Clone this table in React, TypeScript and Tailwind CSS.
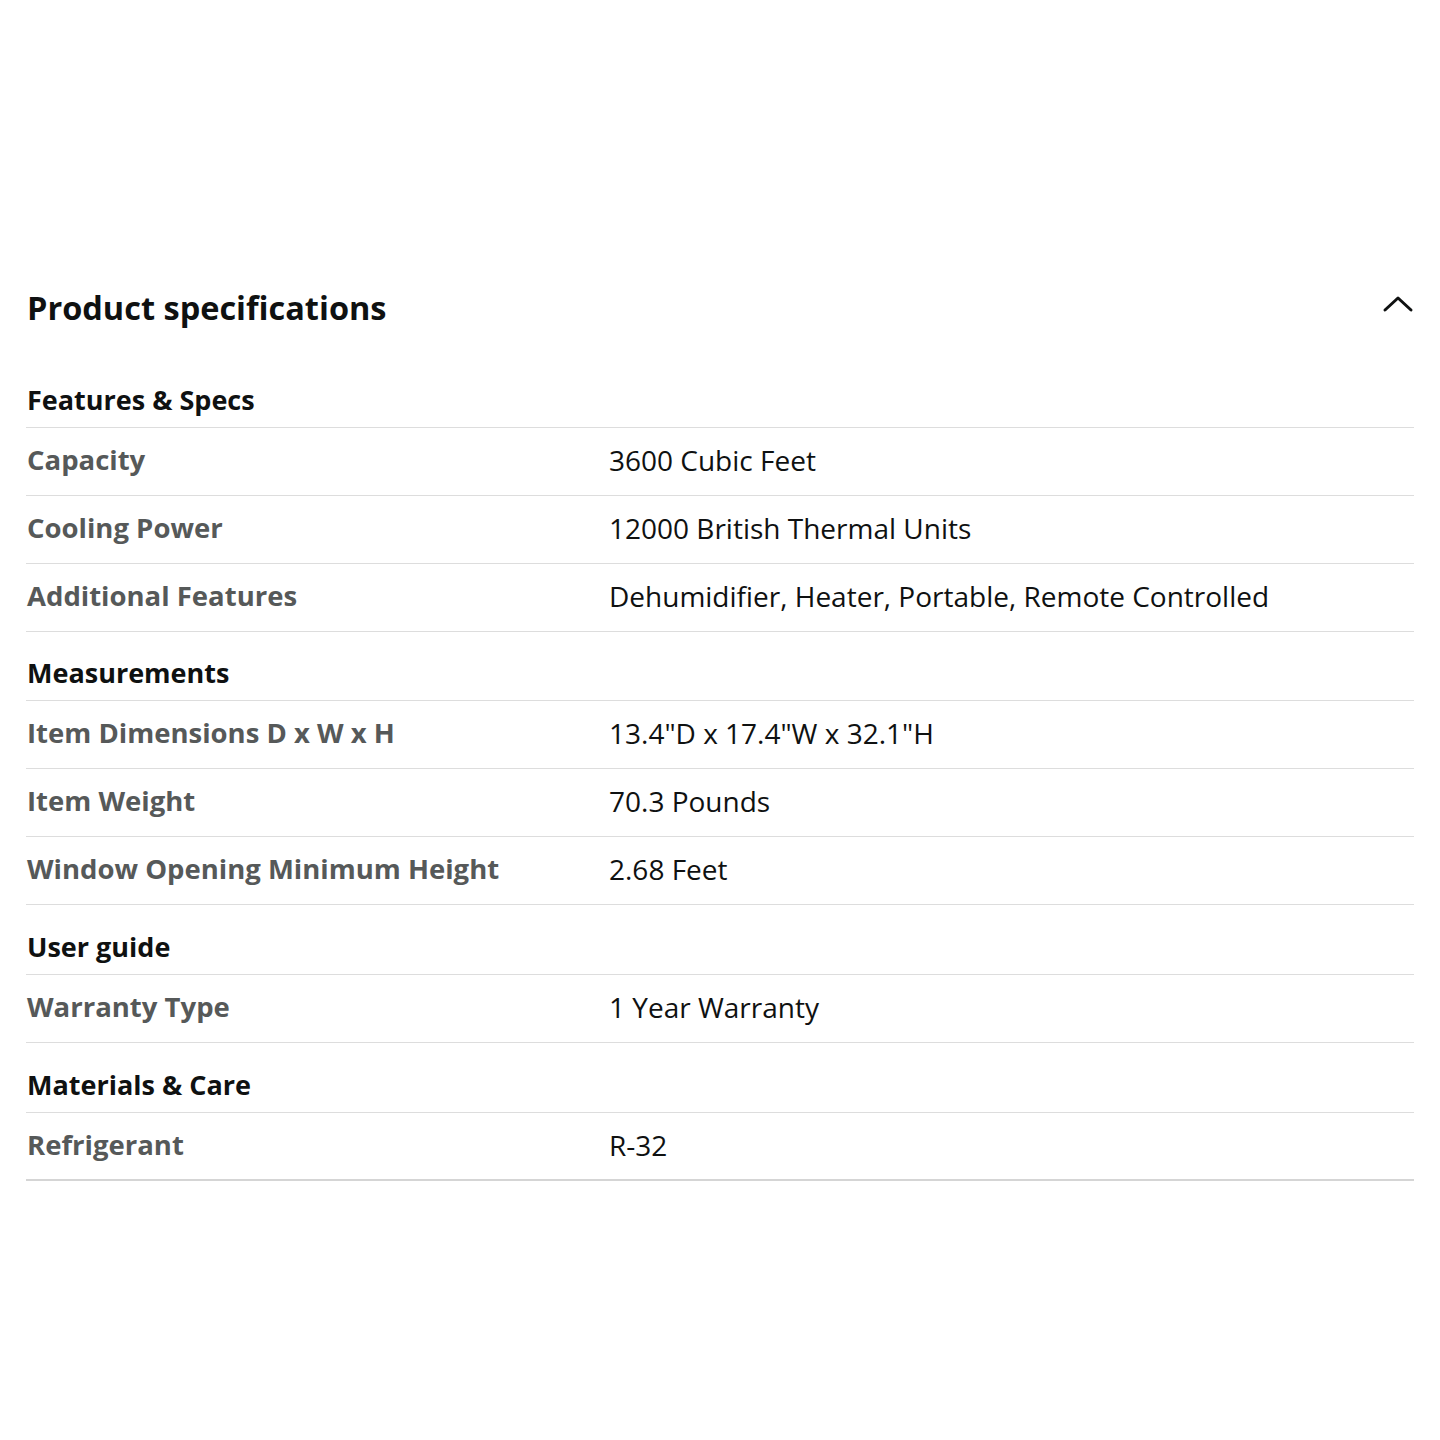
import React from "react";

type Row = { label: string; value: string };
type Section = { title: string; hClass: string; rows: Row[] };

const sections: Section[] = [
  {
    title: "Features & Specs",
    hClass: "h-[53px]",
    rows: [
      { label: "Capacity", value: "3600 Cubic Feet" },
      { label: "Cooling Power", value: "12000 British Thermal Units" },
      { label: "Additional Features", value: "Dehumidifier, Heater, Portable, Remote Controlled" },
    ],
  },
  {
    title: "Measurements",
    hClass: "h-[69px]",
    rows: [
      { label: "Item Dimensions D x W x H", value: '13.4"D x 17.4"W x 32.1"H' },
      { label: "Item Weight", value: "70.3 Pounds" },
      { label: "Window Opening Minimum Height", value: "2.68 Feet" },
    ],
  },
  {
    title: "User guide",
    hClass: "h-[70px]",
    rows: [{ label: "Warranty Type", value: "1 Year Warranty" }],
  },
  {
    title: "Materials & Care",
    hClass: "h-[70px]",
    rows: [{ label: "Refrigerant", value: "R-32" }],
  },
];

export default function App() {
  return (
    <div
      className="w-[1440px] h-[1440px] bg-white text-[#0f1111]"
      style={{ fontFamily: '"Open Sans", "Noto Sans", sans-serif' }}
    >
      <div className="pt-[282px] px-[26px]">
        <div className="flex items-center justify-between h-[52px]">
          <h2 className="text-[32.5px] font-bold leading-none pl-px">Product specifications</h2>
          <svg width="32" height="20" viewBox="0 0 32 20" className="-mt-[10px]">
            <path d="M3 17 L16 5 L29 17" fill="none" stroke="#0f1111" strokeWidth="3" strokeLinecap="round" strokeLinejoin="round" />
          </svg>
        </div>
        <div className="mt-[41px]">
          {sections.map((s, i) => (
            <div key={s.title}>
              <div className={`flex items-end pb-[11px] border-b border-[#dddddd] ${s.hClass}`}>
                <span className="text-[27px] font-bold leading-[32px] pl-px">{s.title}</span>
              </div>
              {s.rows.map((r, j) => (
                <div
                  key={r.label}
                  className={`flex items-center h-[68px] pb-[3px] border-b ${
                    i === sections.length - 1 && j === s.rows.length - 1 ? "border-b-2 border-[#d5d5d5]" : "border-[#dddddd]"
                  }`}
                >
                  <span className="w-[583px] pl-px text-[27.5px] font-bold text-[#565959]">{r.label}</span>
                  <span className="text-[28px] text-[#0f1111]">{r.value}</span>
                </div>
              ))}
            </div>
          ))}
        </div>
      </div>
    </div>
  );
}
